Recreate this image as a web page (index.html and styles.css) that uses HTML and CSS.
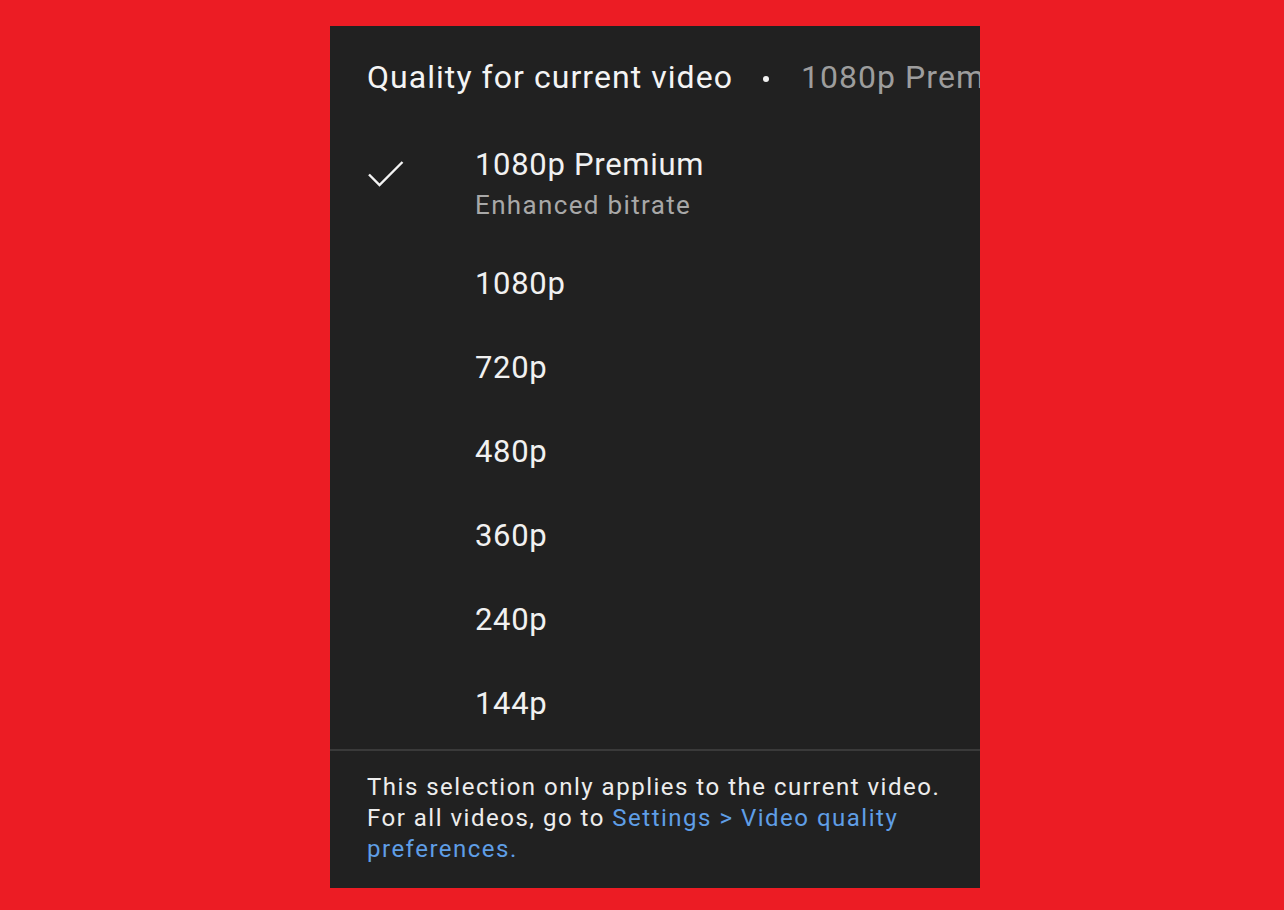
FILE: index.html
```html
<!DOCTYPE html>
<html lang="en">
<head>
<meta charset="UTF-8" />
<meta name="viewport" content="width=device-width, initial-scale=1" />
<title>Quality for current video</title>
<link rel="stylesheet" href="styles.css">
</head>
<body>

<div class="sheet">
  <div class="sheet-head">
    <span class="head-title">Quality for current video</span>
    <span class="head-dot"></span>
    <span class="head-value">1080p Premium</span>
  </div>

  <ul class="quality-list">
    <li class="quality-item quality-item--premium">
      <span class="check">
        <svg viewBox="0 0 38 30" aria-hidden="true">
          <path d="M2 15.5 L12.5 26 L35.5 3" />
        </svg>
      </span>
      <span class="quality-text">
        <span class="quality-label">1080p Premium</span>
        <span class="quality-sub">Enhanced bitrate</span>
      </span>
    </li>
    <li class="quality-item"><span class="check"></span><span class="quality-label">1080p</span></li>
    <li class="quality-item"><span class="check"></span><span class="quality-label">720p</span></li>
    <li class="quality-item"><span class="check"></span><span class="quality-label">480p</span></li>
    <li class="quality-item"><span class="check"></span><span class="quality-label">360p</span></li>
    <li class="quality-item"><span class="check"></span><span class="quality-label">240p</span></li>
    <li class="quality-item"><span class="check"></span><span class="quality-label">144p</span></li>
  </ul>

  <div class="sheet-foot">
    This selection only applies to the current video.<br>
    For all videos, go to <a href="#">Settings &gt; Video quality preferences.</a>
  </div>
</div>

</body>
</html>
```

FILE: styles.css
```css
html, body {
  margin: 0;
  height: 100%;
}
body {
  background-color: #ec1c24;
  font-family: Roboto, "Liberation Sans", Arial, sans-serif;
  padding: 26px 0 0 330px;
  box-sizing: border-box;
}

.sheet {
  width: 650px;
  height: 862px;
  background-color: #212121;
  color: #f1f1f1;
  display: flex;
  flex-direction: column;
  overflow: hidden;
}

/* 見出し */
.sheet-head {
  height: 105px;
  padding-left: 37px;
  display: flex;
  align-items: center;
  white-space: nowrap;
  font-size: 32px;
  letter-spacing: 1.05px;
  padding-bottom: 4px;
  box-sizing: border-box;
}
.head-title {
  color: #f4f4f4;
}
.head-dot {
  width: 6px;
  height: 6px;
  border-radius: 50%;
  background-color: #f1f1f1;
  margin: 4px 32px 0 30px;
  flex: none;
}
.head-value {
  color: #9d9d9d;
}

/* 画質リスト */
.quality-list {
  list-style: none;
  margin: 0;
  padding: 0;
}
.quality-item {
  height: 84px;
  display: flex;
  align-items: center;
}
.quality-item--premium {
  height: 110px;
  padding-bottom: 6px;
  box-sizing: border-box;
}
.check {
  width: 108px;
  margin-left: 37px;
  flex: none;
  display: flex;
  align-items: center;
}
.check svg {
  width: 38px;
  height: 30px;
  fill: none;
  stroke: #f4f4f4;
  stroke-width: 2.4;
  margin-top: -18px;
}
.quality-text {
  display: flex;
  flex-direction: column;
}
.quality-label {
  font-size: 31px;
  letter-spacing: 0.7px;
  color: #f1f1f1;
}
.quality-sub {
  font-size: 26px;
  letter-spacing: 1.35px;
  color: #a8a8a8;
  margin-top: 7px;
}

/* フッター */
.sheet-foot {
  margin-top: auto;
  border-top: 2px solid #3a3a3a;
  padding: 21px 24px 23px 37px;
  font-size: 24px;
  letter-spacing: 1.5px;
  line-height: 31px;
  color: #ededed;
}
.sheet-foot a {
  color: #5f9ee6;
  text-decoration: none;
}
```
